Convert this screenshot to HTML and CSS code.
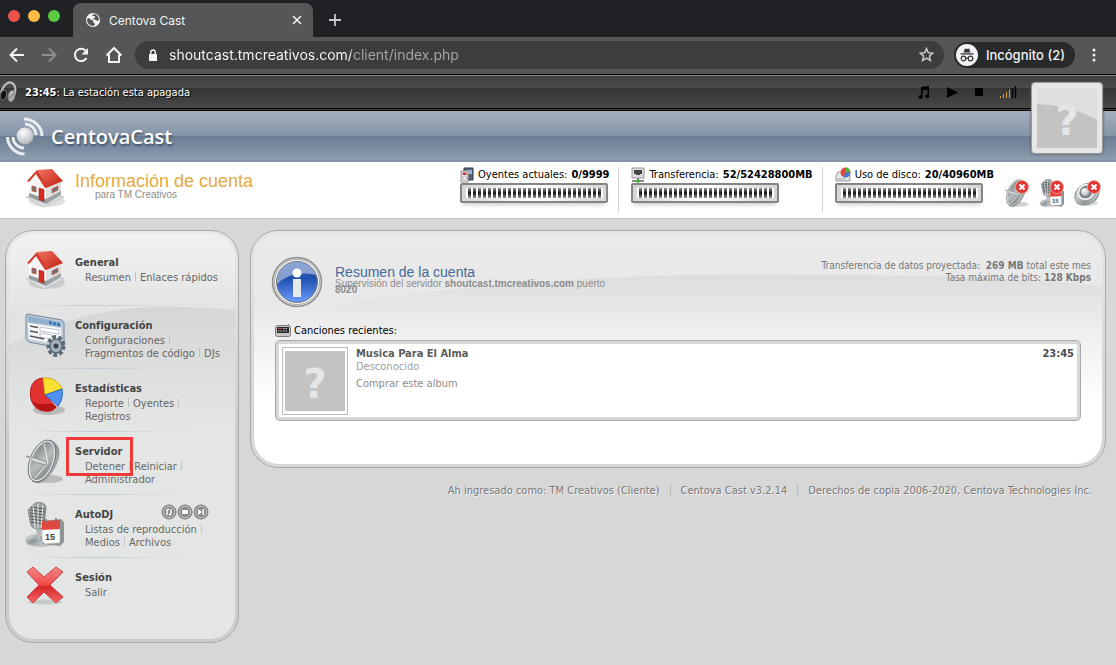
FILE: index.html
```html
<!DOCTYPE html>
<html lang="es">
<head>
<meta charset="utf-8">
<title>Centova Cast</title>
<link rel="stylesheet" href="styles.css">
</head>
<body>
<svg class="defs" aria-hidden="true">
  <defs>
    <linearGradient id="g-roof" x1="0" y1="0" x2="1" y2="1"><stop offset="0" stop-color="#f0735f"/><stop offset="1" stop-color="#c01f10"/></linearGradient>
    <linearGradient id="g-metal" x1="0" y1="0" x2="1" y2="1"><stop offset="0" stop-color="#f4f6f6"/><stop offset=".5" stop-color="#8d9495"/><stop offset="1" stop-color="#d9dddd"/></linearGradient>
    <linearGradient id="g-dish" x1="0" y1="0" x2="1" y2="1"><stop offset="0" stop-color="#6c7475"/><stop offset=".5" stop-color="#b9bfbf"/><stop offset="1" stop-color="#6e7677"/></linearGradient>
    <linearGradient id="g-red" x1="0" y1="0" x2="0" y2="1"><stop offset="0" stop-color="#f58a8a"/><stop offset=".5" stop-color="#ee4848"/><stop offset=".55" stop-color="#d92626"/><stop offset="1" stop-color="#f26a6a"/></linearGradient>
    <linearGradient id="g-side" x1="0" y1="0" x2="0" y2="1"><stop offset="0" stop-color="#d5d6d6"/><stop offset="1" stop-color="#e4e6e5"/></linearGradient>
    <linearGradient id="g-main" x1="0" y1="0" x2="0" y2="1"><stop offset="0" stop-color="#dddddd"/><stop offset=".45" stop-color="#efefef"/><stop offset="1" stop-color="#ffffff"/></linearGradient>
    <radialGradient id="g-ball" cx=".4" cy=".3" r=".8"><stop offset="0" stop-color="#ffffff"/><stop offset="1" stop-color="#a9adb1"/></radialGradient>
    <linearGradient id="g-info" x1="0" y1="0" x2="0" y2="1"><stop offset="0" stop-color="#4a6eb4"/><stop offset=".4" stop-color="#1f4fae"/><stop offset="1" stop-color="#6a9cff"/></linearGradient>
    <symbol id="house" viewBox="0 0 40 40">
      <ellipse cx="22" cy="33" rx="18" ry="6" fill="#000" opacity=".12"/>
      <path d="M1 29l21-7 17 7-20 10z" fill="#dcdedf" stroke="#b4b7b8" stroke-width=".6"/>
      <path d="M4 15l8-9 9 13v17L4 29z" fill="#f7f7f7"/>
      <path d="M4 25l17 6v5L4 29z" fill="#979ea2"/>
      <path d="M21 19l15-6v14l-15 9z" fill="#dfe0e1"/>
      <path d="M21 31l15-8v4l-15 9z" fill="#9ca2a5"/>
      <path d="M12 2l15-1 11 12-17 7z" fill="url(#g-roof)"/>
      <path d="M2 13L12 2l10 17-2 1-9-14-7 8z" fill="#d33c2b"/>
      <path d="M14 20l5 1.500v12L14 31.500z" fill="#d62d1e" stroke="#a51b10" stroke-width=".5"/>
      <path d="M7 18l4 1v5l-4-1.200z" fill="#68707a" stroke="#cf5a49"/>
      <path d="M27 21l6-3v4l-6 3z" fill="#68707a" stroke="#cf5a49" stroke-width=".8"/>
    </symbol>
    <symbol id="dish" viewBox="0 0 40 46">
      <ellipse cx="24" cy="40" rx="14" ry="4" fill="#000" opacity=".18"/>
      <path d="M25 1c9 4 11 12 7 22-3 9-10 18-18 21l-7-2C20 35 30 15 25 1z" fill="url(#g-metal)" stroke="#7c8384" stroke-width=".8"/>
      <ellipse cx="17" cy="22" rx="11" ry="21" transform="rotate(22 17 22)" fill="url(#g-dish)" stroke="#e2e5e5" stroke-width="1.500"/>
      <ellipse cx="17" cy="22" rx="12" ry="22" transform="rotate(22 17 22)" fill="none" stroke="#5b6364" stroke-width=".8"/>
      <path d="M2 20l21 4M23 24L10 39M23 24L19 5" stroke="#eef0f0" stroke-width="1" fill="none"/>
      <path d="M1 17l9 2 12 4-1 3-12-3z" fill="#d3d8d9" stroke="#6c7374" stroke-width=".6"/>
    </symbol>
    <symbol id="mic" viewBox="0 0 40 46">
      <ellipse cx="16" cy="41" rx="15" ry="4" fill="#000" opacity=".15"/>
      <ellipse cx="10" cy="38" rx="9" ry="5" fill="url(#g-metal)" stroke="#9aa0a1" stroke-width=".6"/>
      <path d="M11 24h7l-3 14h-3z" fill="#b4b9ba"/>
      <path d="M8 3c3-4 12-3 13 2l-2 19c-1 4-12 4-13-1L3 8z" fill="#9da3a4" stroke="#666c6d" stroke-width=".7"/>
      <path d="M6 5l14 2M5 8l15 2M5 11l14 2M5 14l14 2M6 17l13 2M6 20l13 2" stroke="#454b4c" stroke-width="1.200"/>
      <path d="M8 3l2 23M13 1v26M18 3l-2 23" stroke="#eceeee" stroke-width=".9"/>
      <path d="M19 19l17-2 3 3v20l-4 4-17-2z" fill="#8f9596"/>
      <path d="M17 20l18-1v22l-15 1-3-3z" fill="#fbfbfb" stroke="#a3a8a9" stroke-width=".6"/>
      <path d="M17 19l18-1v9l-18 1z" fill="#e0483f"/>
      <path d="M21 17v4M31 16v4" stroke="#777" stroke-width="1.500"/>
      <text x="20" y="38" class="cal-day">15</text>
    </symbol>
    <symbol id="badge" viewBox="0 0 14 14">
      <circle cx="7" cy="7" r="6.500" fill="#e4322f" stroke="#f3a3a0" stroke-width=".8"/>
      <path d="M4.500 4.500l5 5M9.500 4.500l-5 5" stroke="#fff" stroke-width="2.200"/>
    </symbol>
  </defs>
</svg>

<header class="browser">
  <div class="tabstrip">
    <div class="lights"><i class="light red"></i><i class="light amber"></i><i class="light green"></i></div>
    <div class="tab">
      <svg class="globe" viewBox="0 0 14 14"><circle cx="7" cy="7" r="7" fill="#f1f3f4"/><path d="M2 5c2 0 2 2 4 2s0 2 2 3 0 3-1 3C4 13 1 10 1 7zM6 2c1 2 3 0 3 2s-2 1-2 2 3 0 4 2l2-1c0-3-2-5-4-6z" fill="#555657"/></svg>
      <span class="tab-title">Centova Cast</span>
      <button class="bare" aria-label="Cerrar"><svg width="10" height="10" viewBox="0 0 10 10"><path d="M1 1l8 8M9 1L1 9" stroke="#f1f3f4" stroke-width="1.600"/></svg></button>
    </div>
    <button class="bare newtab" aria-label="Nueva pestaña"><svg width="12" height="12" viewBox="0 0 12 12"><path d="M6 0v12M0 6h12" stroke="#c8c9ca" stroke-width="1.800"/></svg></button>
  </div>
  <div class="toolbar">
    <nav class="navbtns">
      <button class="bare" aria-label="Atrás"><svg width="16" height="16" viewBox="0 0 16 16"><path d="M15 8H2M8 1.500L1.500 8 8 14.500" fill="none" stroke="#f1f3f4" stroke-width="2"/></svg></button>
      <button class="bare" aria-label="Adelante"><svg width="16" height="16" viewBox="0 0 16 16"><path d="M1 8h13M8 1.500L14.500 8 8 14.500" fill="none" stroke="#8c8d8e" stroke-width="2"/></svg></button>
      <button class="bare" aria-label="Recargar"><svg width="16" height="16" viewBox="0 0 16 16"><path d="M13.500 11A6.200 6.200 0 1 1 12.600 3.600" fill="none" stroke="#f1f3f4" stroke-width="2"/><path d="M15 1v6.500H8.500z" fill="#f1f3f4"/></svg></button>
      <button class="bare" aria-label="Inicio"><svg width="18" height="18" viewBox="0 0 18 18"><path d="M4 8.500V16h10V8.500M1.500 9.500L9 2l7.500 7.500" fill="none" stroke="#f1f3f4" stroke-width="2"/></svg></button>
    </nav>
    <div class="omnibox">
      <svg width="10" height="12" viewBox="0 0 10 12"><path d="M1 5h8v7H1z" fill="#f1f3f4"/><path d="M2.800 5.500V3.200a2.200 2.200 0 0 1 4.400 0v2.300" fill="none" stroke="#f1f3f4" stroke-width="1.400"/></svg>
      <input class="url" type="text" aria-label="Dirección" value="shoutcast.tmcreativos.com/client/index.php">
      <button class="bare" aria-label="Favorito"><svg width="15" height="15" viewBox="0 0 15 15"><path d="M7.500 1.500l1.800 4.200 4.500.4-3.400 3 1 4.400-3.900-2.300-3.900 2.300 1-4.400-3.400-3 4.500-.4z" fill="none" stroke="#c8c9ca" stroke-width="1.500"/></svg></button>
    </div>
    <div class="incognito">
      <svg width="22" height="22" viewBox="0 0 22 22"><circle cx="11" cy="11" r="11" fill="#f1f3f4"/><path d="M7.500 8.500L9 4.500l2 .6 2-.6 1.500 4zM4.500 9.200h13v1.300h-13z" fill="#333"/><circle cx="7.500" cy="14.500" r="2.300" fill="none" stroke="#333" stroke-width="1.200"/><circle cx="14.500" cy="14.500" r="2.300" fill="none" stroke="#333" stroke-width="1.200"/><path d="M9.500 14h3" stroke="#333" stroke-width="1.200"/></svg>
      <span>Incógnito (2)</span>
    </div>
    <button class="bare menu" aria-label="Menú"><svg width="4" height="14" viewBox="0 0 4 14"><circle cx="2" cy="2" r="1.500" fill="#f1f3f4"/><circle cx="2" cy="7" r="1.500" fill="#f1f3f4"/><circle cx="2" cy="12" r="1.500" fill="#f1f3f4"/></svg></button>
  </div>
</header>

<div class="masthead">
  <div class="player">
    <svg class="phones" width="17" height="22" viewBox="0 0 17 22"><path d="M1 12C3 4 8 0 12 2c4 2 4 8 2 13" fill="none" stroke="#b9bbbb" stroke-width="2.200"/><ellipse cx="3.500" cy="14" rx="3" ry="5" transform="rotate(15 3.500 14)" fill="#111" stroke="#777"/><ellipse cx="11.500" cy="15" rx="3.200" ry="5.500" transform="rotate(15 11.500 15)" fill="url(#g-metal)" stroke="#888"/></svg>
    <p class="status"><b>23:45</b>: La estación esta apagada</p>
    <div class="controls">
      <svg width="12" height="13" viewBox="0 0 12 13"><path d="M3 1l8-1v10.500H9.500V3.500l-5 .8V12H3z"/><circle cx="2.500" cy="11" r="2"/><circle cx="9.200" cy="10.300" r="2"/></svg>
      <button class="bare" aria-label="Reproducir"><svg width="11" height="11" viewBox="0 0 11 11"><path d="M0 0l11 5.500L0 11z"/></svg></button>
      <button class="bare" aria-label="Parar"><svg width="8" height="8" viewBox="0 0 8 8"><path d="M0 0h8v8H0z"/></svg></button>
      <svg width="17" height="12" viewBox="0 0 17 12"><path d="M.5 10v2M3.500 8v4M6.500 6v6M9.500 4v8" stroke="#d99a2b"/><path d="M12.500 2v10M15.500 0v12" stroke="#000" stroke-width="1.500"/></svg>
    </div>
  </div>
  <div class="brand">
    <svg width="40" height="40" viewBox="0 0 40 40"><circle cx="19" cy="19" r="8.500" fill="url(#g-ball)"/><g fill="none" stroke="#e9ecef" stroke-width="3"><path d="M19 7c6 0 11 5 11 11M18 2c10 0 18 8 18 17"/><path d="M7 20c0 6 5 11 11 11M1.500 20c0 9 8 17 17 17"/></g></svg>
    <span class="brand-name">CentovaCast</span>
  </div>
  <div class="cover cover-top"><svg viewBox="0 0 60 60"><path d="M0 0h60v60H0z" fill="#c3c3c3"/><path d="M0 0h60v32Q36 18 0 16z" fill="#dedede"/><text x="30" y="47" class="question">?</text></svg></div>
</div>

<section class="infobar">
  <svg class="info-icon" width="40" height="40"><use href="#house"/></svg>
  <div class="info-title">
    <h1>Información de cuenta</h1>
    <p>para TM Creativos</p>
  </div>
  <dl class="stats">
    <div class="stat">
      <svg width="14" height="16" viewBox="0 0 14 16"><path d="M4 1h9v12H4z" fill="#5a6474" stroke="#333b46"/><path d="M6 3h6v4H6z" fill="#9cb3d6"/><path d="M1 4h7v11H1z" fill="#eee" stroke="#8b8b8b"/><circle cx="4.500" cy="11" r="2" fill="#fff" stroke="#aaa"/><path d="M2.500 5.500h4v2.500h-4z" fill="#c23a33"/></svg>
      <dt>Oyentes actuales:</dt><dd>0/9999</dd><span class="gauge"></span>
    </div>
    <div class="stat">
      <svg width="14" height="16" viewBox="0 0 14 16"><path d="M1 1h12v10H1z" fill="#dcdcdc" stroke="#999"/><path d="M3 3h8v4H9v1H5V7H3z" fill="#444"/><path d="M7 11v3M1 14h12" stroke="#666" stroke-width="1.500"/><circle cx="7" cy="14" r="1.800" fill="#38b32c"/></svg>
      <dt>Transferencia:</dt><dd>52/52428800MB</dd><span class="gauge"></span>
    </div>
    <div class="stat">
      <svg width="16" height="16" viewBox="0 0 16 16"><path d="M1 9l2-4h10l2 4v5H1z" fill="#e5e6e6" stroke="#9a9a9a"/><path d="M2 12h8" stroke="#aaa"/><circle cx="10.500" cy="5.500" r="5" fill="#e4483b"/><path d="M10.500 5.500V.5a5 5 0 0 1 5 5z" fill="#4cba3c"/><path d="M10.500 5.500h5a5 5 0 0 1-7 4.500z" fill="#4279dc"/></svg>
      <dt>Uso de disco:</dt><dd>20/40960MB</dd><span class="gauge"></span>
    </div>
  </dl>
  <div class="actions">
    <button class="bare" aria-label="Servidor detenido"><svg width="27" height="30" viewBox="0 0 27 30"><use href="#dish" width="26" height="29" y="1"/><use href="#badge" x="11" y="2" width="14" height="14"/></svg></button>
    <button class="bare" aria-label="AutoDJ detenido"><svg width="27" height="30" viewBox="0 0 27 30"><use href="#mic" width="26" height="29" y="1"/><use href="#badge" x="11" y="2" width="14" height="14"/></svg></button>
    <button class="bare" aria-label="Fuente detenida"><svg width="27" height="30" viewBox="0 0 27 30"><ellipse cx="13" cy="25" rx="11" ry="3" opacity=".15"/><ellipse cx="13" cy="16" rx="13" ry="10" transform="rotate(-35 13 16)" fill="url(#g-metal)" stroke="#8a9091"/><ellipse cx="12" cy="14" rx="8" ry="7" transform="rotate(-35 12 14)" fill="#778082" stroke="#edf0f0" stroke-width="2"/><circle cx="11" cy="14" r="4" fill="url(#g-ball)"/><use href="#badge" x="13" y="2" width="14" height="14"/></svg></button>
  </div>
</section>

<div class="columns">
  <aside class="panel">
    <div class="panel-in side">
      <svg class="gloss side-gloss" viewBox="0 0 226 120" preserveAspectRatio="none"><path d="M0 37Q80-2 160 0 200 0 226 3v117H0z" fill="url(#g-side)"/></svg>
      <nav class="menu-list">
        <section class="entry">
          <svg width="40" height="40"><use href="#house"/></svg>
          <div><h2>General</h2><ul><li><a href="#">Resumen</a></li> <li><a href="#">Enlaces rápidos</a></li></ul></div>
        </section>
        <section class="entry">
          <svg width="42" height="44" viewBox="0 0 42 44"><path d="M2 1l35 6 2 3v22l-5 3L4 29l-3-3V3z" fill="#c2ced9" stroke="#718599"/><path d="M3 10l33 5v17L4 26z" fill="#f7f9fb"/><path d="M3 3l33 6v5L3 9z" fill="#93b0cb"/><path d="M24 8l3 .5v3L24 11zM28 9l3 .5v3l-3-.5zM32 10l3 .5v3l-3-.5z" fill="#3576c5"/><path d="M15 14l19 3v4l-19-3zM15 20l12 2v4l-12-2z" fill="#fff" stroke="#b8c2cb"/><path d="M5 13l8 1.500M5 18l8 1.500M5 23l14 3" stroke="#555" stroke-width="1.500"/><ellipse cx="31" cy="33" rx="7" ry="8.500" fill="none" stroke="#5c6a74" stroke-width="5" stroke-dasharray="3.500 2"/><ellipse cx="31" cy="33" rx="6" ry="7" fill="#a5b2bb" stroke="#5c6a74" stroke-width="1.500"/><circle cx="31" cy="33" r="2.500" fill="#39434b"/></svg>
          <div><h2>Configuración</h2><ul><li><a href="#">Configuraciones</a></li> <li><a href="#">Fragmentos de código</a></li> <li><a href="#">DJs</a></li></ul></div>
        </section>
        <section class="entry">
          <svg width="40" height="40" viewBox="0 0 40 40"><ellipse cx="24" cy="34" rx="16" ry="5" opacity=".18"/><path d="M18 2C7 3 4 12 6 23c2 8 8 12 14 12 6 1 9-1 11-4L19 18z" fill="#e23232" stroke="#b31919"/><path d="M8 24c5 7 15 3 20 4l3 3c-4 5-12 5-17 2-3-2-5-5-6-9z" fill="#b81414"/><path d="M18 2l2 17 17-6C34 5 26 1 18 2z" fill="#fbe132" stroke="#d9a51b"/><path d="M37 13l-17 6 13 11c4-5 5-11 4-17z" fill="#4f92f2" stroke="#2a68c2"/></svg>
          <div><h2>Estadísticas</h2><ul><li><a href="#">Reporte</a></li> <li><a href="#">Oyentes</a></li> <li><a href="#">Registros</a></li></ul></div>
        </section>
        <section class="entry">
          <svg width="40" height="46"><use href="#dish"/></svg>
          <div><h2>Servidor</h2><ul><li><a href="#">Detener</a></li> <li><a href="#">Reiniciar</a></li> <li><a href="#">Administrador</a></li></ul></div>
          <span class="highlight"></span>
        </section>
        <section class="entry">
          <svg width="40" height="46"><use href="#mic"/></svg>
          <div>
            <h2>AutoDJ</h2><ul><li><a href="#">Listas de reproducción</a></li> <li><a href="#">Medios</a></li> <li><a href="#">Archivos</a></li></ul>
          </div>
          <div class="dj-controls">
            <button class="bare" aria-label="Actualizar"><svg width="16" height="16" viewBox="0 0 16 16"><circle cx="8" cy="8" r="7" fill="#8a8a8a" stroke="#777"/><circle cx="8" cy="8" r="5.800" fill="none" stroke="#ddd" stroke-width=".8"/><path d="M6 11V6l2-1M10 5v5l-2 1" fill="none" stroke="#fff" stroke-width="1.400"/></svg></button>
            <button class="bare" aria-label="Detener"><svg width="16" height="16" viewBox="0 0 16 16"><circle cx="8" cy="8" r="7" fill="#8a8a8a" stroke="#777"/><circle cx="8" cy="8" r="5.800" fill="none" stroke="#ddd" stroke-width=".8"/><path d="M5 6h6v4H5z" fill="#fff"/></svg></button>
            <button class="bare" aria-label="Siguiente"><svg width="16" height="16" viewBox="0 0 16 16"><circle cx="8" cy="8" r="7" fill="#8a8a8a" stroke="#777"/><circle cx="8" cy="8" r="5.800" fill="none" stroke="#ddd" stroke-width=".8"/><path d="M5 5l4 3-4 3zM9.500 5h1.500v6H9.500z" fill="#fff"/></svg></button>
          </div>
        </section>
        <section class="entry">
          <svg width="40" height="40" viewBox="0 0 40 40"><ellipse cx="20" cy="37" rx="17" ry="2.500" opacity=".12"/><path d="M2 7l6-5 11 10L31 2l7 5-13 13 13 12-7 6-12-11L8 38l-6-6 12-12z" fill="url(#g-red)" stroke="#cf4040" stroke-linejoin="round"/></svg>
          <div><h2>Sesión</h2><ul><li><a href="#">Salir</a></li></ul></div>
        </section>
      </nav>
    </div>
  </aside>

  <div class="content">
    <main class="panel">
      <div class="panel-in main">
        <svg class="gloss main-gloss" viewBox="0 0 848 130" preserveAspectRatio="none"><path d="M0 46Q240-4 560 1Q740 1 848 12v118H0z" fill="url(#g-main)"/></svg>
        <div class="summary">
          <svg width="52" height="52" viewBox="0 0 52 52"><circle cx="26" cy="26" r="24.500" fill="#d9d9d9" stroke="#8f8f8f" stroke-width="1.500"/><circle cx="26" cy="26" r="22.500" fill="#fff" stroke="#aaa"/><circle cx="26" cy="26" r="20.500" fill="url(#g-info)" stroke="#777"/><path d="M6 26C6 14 15 6 26 6c9 0 17 6 19 13-14-3-26-2-39 9z" fill="#a6b8dc" opacity=".75"/><circle cx="26" cy="17" r="4.500" fill="#fff"/><path d="M22 23h8v18h-8z" fill="#e7e9ee"/></svg>
          <div class="summary-title">
            <h2>Resumen de la cuenta</h2>
            <p>Supervisión del servidor <b>shoutcast.tmcreativos.com</b> puerto <b>8020</b></p>
          </div>
          <p class="quota">Transferencia de datos proyectada: &nbsp;<b>269 MB</b> total este mes<br>Tasa máxima de bits: <b>128 Kbps</b></p>
        </div>
        <h3><svg width="16" height="13" viewBox="0 0 16 13"><path d="M12 2l2-2" stroke="#777"/><rect x=".5" y="1.500" width="15" height="11" rx="2" fill="#c6c6c6" stroke="#7c7c7c"/><path d="M2 3h12v6H2z" fill="#282828"/><path d="M3 4.500h10M3 7h10" stroke="#ccc" stroke-dasharray="1.500 1"/><path d="M3 4.500h5" stroke="#d44" stroke-dasharray="1.500 1"/></svg>Canciones recientes:</h3>
        <article class="song">
          <div class="cover cover-song"><svg viewBox="0 0 60 60"><path d="M0 0h60v60H0z" fill="#c3c3c3"/><text x="30" y="47" class="question">?</text></svg></div>
          <div class="song-text">
            <h4>Musica Para El Alma</h4>
            <p>Desconocido</p>
            <a href="#">Comprar este album</a>
          </div>
          <time>23:45</time>
        </article>
      </div>
    </main>
    <footer>
      <span>Ah ingresado como: TM Creativos (Cliente)</span>
      <span>Centova Cast v3.2.14</span>
      <span>Derechos de copia 2006-2020, <a href="#">Centova Technologies Inc.</a></span>
    </footer>
  </div>
</div>
</body>
</html>
```

FILE: styles.css
```css
* { box-sizing: border-box; }
body {
  margin: 0;
  background: #d7d7d7;
  color: #000;
  font: 11px/13px "DejaVu Sans Condensed", "DejaVu Sans", sans-serif;
}
h1, h2, h3, h4, p, ul, dl, dt, dd { margin: 0; padding: 0; }
a { color: inherit; text-decoration: none; }
svg { display: block; flex: none; }
.defs { position: absolute; width: 0; height: 0; }
.bare { display: block; flex: none; padding: 0; border: 0; background: none; }

/* Browser window */
.browser { font-family: Inter, Roboto, sans-serif; color: #f1f3f4; }
.tabstrip { display: flex; height: 37px; background: #202124; padding-top: 3px; }
.lights { display: flex; gap: 8px; width: 73px; padding: 7px 0 0 8px; }
.light { width: 12px; height: 12px; border-radius: 50%; }
.red { background: #ee524e; }
.amber { background: #f9bd43; }
.green { background: #5bcb42; }
.tab { display: flex; align-items: center; gap: 9px; width: 240px; padding: 0 11px 0 13px; border-radius: 8px 8px 0 0; background: #555657; }
.globe { width: 14px; height: 14px; }
.tab-title { flex: 1; font-size: 12px; }
.newtab { padding: 0 16px; }
.toolbar { display: flex; align-items: center; height: 38px; padding: 0 20px 2px 9px; background: #555657; border-bottom: 1px solid #000; }
.navbtns { display: flex; align-items: center; gap: 16px; width: 126px; }
.omnibox { display: flex; align-items: center; flex: 1; height: 28px; padding: 0 10px 0 13px; border-radius: 14px; background: #3c3d3f; }
.url {
  flex: 1; min-width: 0; margin-left: 11px; padding: 0; border: 0;
  font: 14px/18px Inter, sans-serif;
  color: transparent;
  background: linear-gradient(90deg, #fff 182px, #a6a8aa 182px);
  -webkit-background-clip: text; background-clip: text;
}
.incognito { display: flex; align-items: center; gap: 8px; height: 26px; margin-left: 10px; padding: 0 10px 0 2px; border-radius: 13px; background: #28292b; font: 500 13px/18px Inter, sans-serif; }
.menu { margin-left: 17px; }

/* Player and brand bars */
.masthead { position: relative; }
.player {
  display: flex; align-items: center; height: 36px; padding-right: 99px;
  border-top: 1px solid #8a8a8a; border-bottom: 3px double #000;
  background: linear-gradient(#404040, #4b4b4b 36%, #353535 38%, #484848);
}
.status { flex: 1; margin-left: 8px; padding-top: 1px; color: #fff; text-shadow: 1px 1px 1px #000; }
.controls { display: flex; align-items: center; gap: 17px; }
.brand {
  display: flex; align-items: center; gap: 5px; height: 51px; padding-left: 6px;
  background: linear-gradient(#a3afbd, #8595a8 48%, #6a7d92 50%, #8d9bae 94%, #8190a4);
}
.brand-name { font: 600 20px/26px "Open Sans", sans-serif; color: #fff; text-shadow: 1px 2px 2px #44546a; }
.question { font: bold 40px "DejaVu Sans", sans-serif; text-anchor: middle; fill: #e6e6e6; }
.cover-top {
  position: absolute; right: 13px; top: 7px; width: 72px; height: 72px; padding: 5px;
  border: 1px solid #999; border-radius: 4px; background: #e6e6e6; box-shadow: 0 0 3px #555;
}

/* Account bar */
.infobar { display: flex; height: 57px; padding: 5px 15px 0 25px; border-bottom: 1px solid #bbb; background: #fff; }
.info-icon { margin-top: 1px; }
.info-title { flex: 1; margin-left: 10px; padding-top: 6px; }
.info-title h1 { color: #e6aa3c; font: 18px/17px "Liberation Sans", sans-serif; }
.info-title p { padding-left: 20px; color: #8c8c8c; font: 10px/10px "Liberation Sans", sans-serif; }
.stats { display: flex; height: 46px; }
.stat { display: grid; grid-template-columns: auto auto auto; justify-content: start; align-content: start; column-gap: 4px; padding-right: 9px; }
.stat + .stat { padding-left: 12px; border-left: 1px solid #d4d4d4; }
.stat:last-child { padding-right: 0; }
.stat svg { height: 16px; }
.stat dt, .stat dd { padding-top: 1px; }
.stat dd { font-weight: bold; }
.gauge {
  grid-column: 1 / -1; width: 148px; height: 20px;
  border: 2px solid #858585; border-radius: 2px;
  background: repeating-linear-gradient(90deg, #fff 0 2px, transparent 2px 5px) 4px 3px / 137px 10px no-repeat,
    linear-gradient(#999, #111 50%, #999) 4px 3px / 137px 10px no-repeat, linear-gradient(90deg, #d5d5d5, #fff, #d5d5d5);
  box-shadow: 0 4px 5px -3px #bbb;
}
.actions { display: flex; align-items: start; gap: 8px; margin-left: 10px; padding-top: 11px; }

/* Panels */
.columns { display: grid; grid-template-columns: 234px 1fr; gap: 11px; align-items: start; padding: 11px 10px 20px 5px; }
.panel { padding: 3px; border: 1px solid #a9a9a9; border-radius: 28px; background: linear-gradient(#e9e9e9, #cdcdcd 50%); }
.content .panel { background: linear-gradient(#e6e6e6, #d7d7d7 60%); }
.panel-in { position: relative; overflow: hidden; border-radius: 25px; }
.panel-in > * { position: relative; }
.panel-in .gloss { position: absolute; left: 0; width: 100%; }
.main { padding: 22px 21px 43px; background: linear-gradient(#eaeaea, #e8e8e8 30%, #fff 75%); }
.side { padding: 9px 7px 18px 16px; background: linear-gradient(#f1f1f1, #e3e3e3 20%, #e4e6e5 50%); }
.side-gloss { top: 73px; height: 120px; }
.main-gloss { top: 40px; height: 130px; }

.entry {
  position: relative; display: grid; grid-template-columns: 40px 1fr; column-gap: 10px; height: 63px; padding-top: 13px;
  background: linear-gradient(90deg, transparent, #bccbdd 35%, #d9e0e8 65%, transparent) bottom / 100% 1px no-repeat;
}
.entry:last-child { background: none; }
.entry > svg { margin-top: -6px; }
.entry h2 { font-size: 11px; line-height: 13px; color: #444; }
.entry ul { padding: 2px 0 0 10px; list-style: none; color: #666; }
.entry li { display: inline; white-space: nowrap; }
.entry li:not(:last-child)::after { content: ""; display: inline-block; width: 1px; height: 9px; margin: 0 1px 0 4px; background: #c2c4c4; }
.highlight { position: absolute; left: 41px; top: 5px; width: 67px; height: 39px; border: 3px solid #ee3a39; }
.dj-controls { position: absolute; right: 19px; top: 9px; display: flex; }
.cal-day { font: bold 9px "Liberation Sans", sans-serif; fill: #444; }

.summary { display: flex; }
.summary > svg { margin-left: -4px; }
.summary-title { flex: 1; margin-left: 12px; padding-top: 8px; }
.summary-title h2 { color: #44699b; font: 14px/17px "Liberation Sans", sans-serif; }
.summary-title p { max-width: 280px; color: #8c8c8c; font: 10px/6px "Liberation Sans", sans-serif; }
.quota { padding: 4px 0 0; margin-right: -10px; font-size: 10px; line-height: 12px; color: #777; text-align: right; }
.main h3 { display: flex; align-items: center; gap: 3px; margin-top: 16px; font-size: 11px; line-height: 13px; font-weight: normal; }
.song { display: flex; margin-top: 3px; padding: 3px; border: 1px solid #a9a9a9; border-radius: 5px; background: #fff; box-shadow: inset 0 0 0 3px #d7d7d7; }
.cover-song { width: 66px; height: 68px; margin: 3px 8px 2px 3px; padding: 3px 2px; border: 1px solid #bbb; background: #fff; }
.song-text { flex: 1; padding-top: 3px; color: #8c8c8c; }
.song-text h4 { font-size: 11px; color: #5c5c5c; }
.song-text p { color: #a0a0a0; }
.song-text a { display: block; margin-top: 4px; }
.song time { padding: 3px 3px 0 0; font-weight: bold; color: #4c4c4c; }

footer { display: flex; justify-content: flex-end; padding: 16px 14px 0 0; color: #777; text-shadow: 1px 1px 0 #f2f2f2; }
footer span + span { margin-left: 10px; padding-left: 10px; border-left: 1px solid #bbb; }
```
